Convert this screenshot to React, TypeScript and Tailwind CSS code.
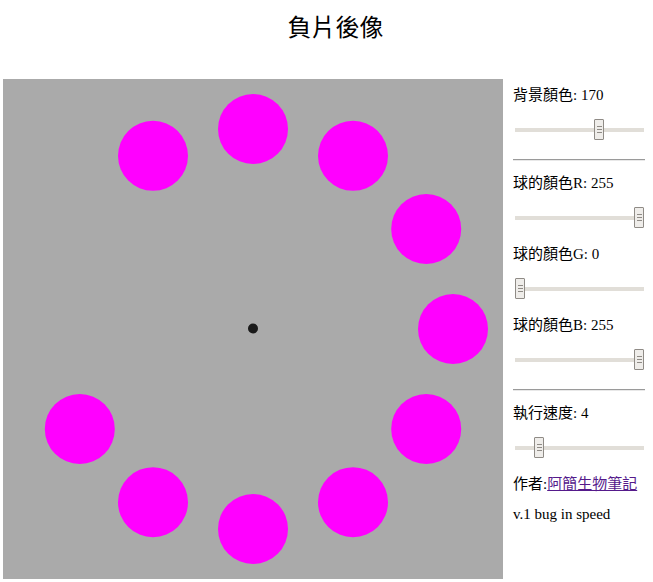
const FONT = '"Liberation Serif", "Noto Sans CJK TC", serif';

// ring of after-image balls, two gaps on the left side
const angles = [0, 30, 60, 90, 120, 150, 180, 210, 240, 330];

function Slider({ value, max }: { value: number; max: number }) {
  const left = (value / max) * 119;
  return (
    <div className="relative h-[20px] flex items-center pl-[2px] pr-[1px]">
      <div className="w-full h-[4px] bg-[#e1ded8]" />
      <div
        className="absolute top-[-1px] w-[10px] h-[21px] bg-[#efedea] border border-[#8f8b86] rounded-[1px] flex flex-col items-center justify-center gap-[2px]"
        style={{ left: 2 + left }}
      >
        <div className="w-[5px] h-px bg-[#8f8b86]" />
        <div className="w-[5px] h-px bg-[#8f8b86]" />
        <div className="w-[5px] h-px bg-[#8f8b86]" />
      </div>
    </div>
  );
}

function Rule({ className }: { className: string }) {
  return <div className={`h-[2px] border-t border-[#9a9a9a] border-b border-b-[#e8e8e8] ${className}`} />;
}

export default function App() {
  return (
    <div className="bg-white text-black min-h-[582px]" style={{ fontFamily: FONT }}>
      <div className="pt-[12px] pl-[18px] text-center text-[24px] leading-[32px] font-normal">負片後像</div>

      <div className="mt-[35px] flex pl-[3px]">
        <svg width="500" height="500" viewBox="0 0 500 500" className="shrink-0 block">
          <rect width="500" height="500" fill="#aaaaaa" />
          {angles.map((a) => {
            const r = (a * Math.PI) / 180;
            return <circle key={a} cx={250 + 200 * Math.sin(r)} cy={250 - 200 * Math.cos(r)} r="35" fill="#ff00ff" />;
          })}
          <circle cx="250" cy="249.5" r="5" fill="#1a1a1a" />
        </svg>

        <div className="ml-[10px] w-[132px] text-[15px] leading-[20px]">
          <div className="mt-[6px] h-[20px]">背景顏色: 170</div>
          <div className="mt-[15px]"><Slider value={170} max={255} /></div>
          <Rule className="mt-[19px]" />
          <div className="mt-[12px] h-[20px]">球的顏色R: 255</div>
          <div className="mt-[15px]"><Slider value={255} max={255} /></div>
          <div className="mt-[16px] h-[20px]">球的顏色G: 0</div>
          <div className="mt-[15px]"><Slider value={0} max={255} /></div>
          <div className="mt-[16px] h-[20px]">球的顏色B: 255</div>
          <div className="mt-[15px]"><Slider value={255} max={255} /></div>
          <Rule className="mt-[19px]" />
          <div className="mt-[12px] h-[20px]">執行速度: 4</div>
          <div className="mt-[15px]"><Slider value={4} max={25} /></div>
          <div className="mt-[16px] h-[20px] whitespace-nowrap">
            作者:<a href="#" className="text-[#551a8b] underline">阿簡生物筆記</a>
          </div>
          <div className="mt-[10px] h-[20px] whitespace-nowrap">v.1 bug in speed</div>
        </div>
      </div>
    </div>
  );
}
